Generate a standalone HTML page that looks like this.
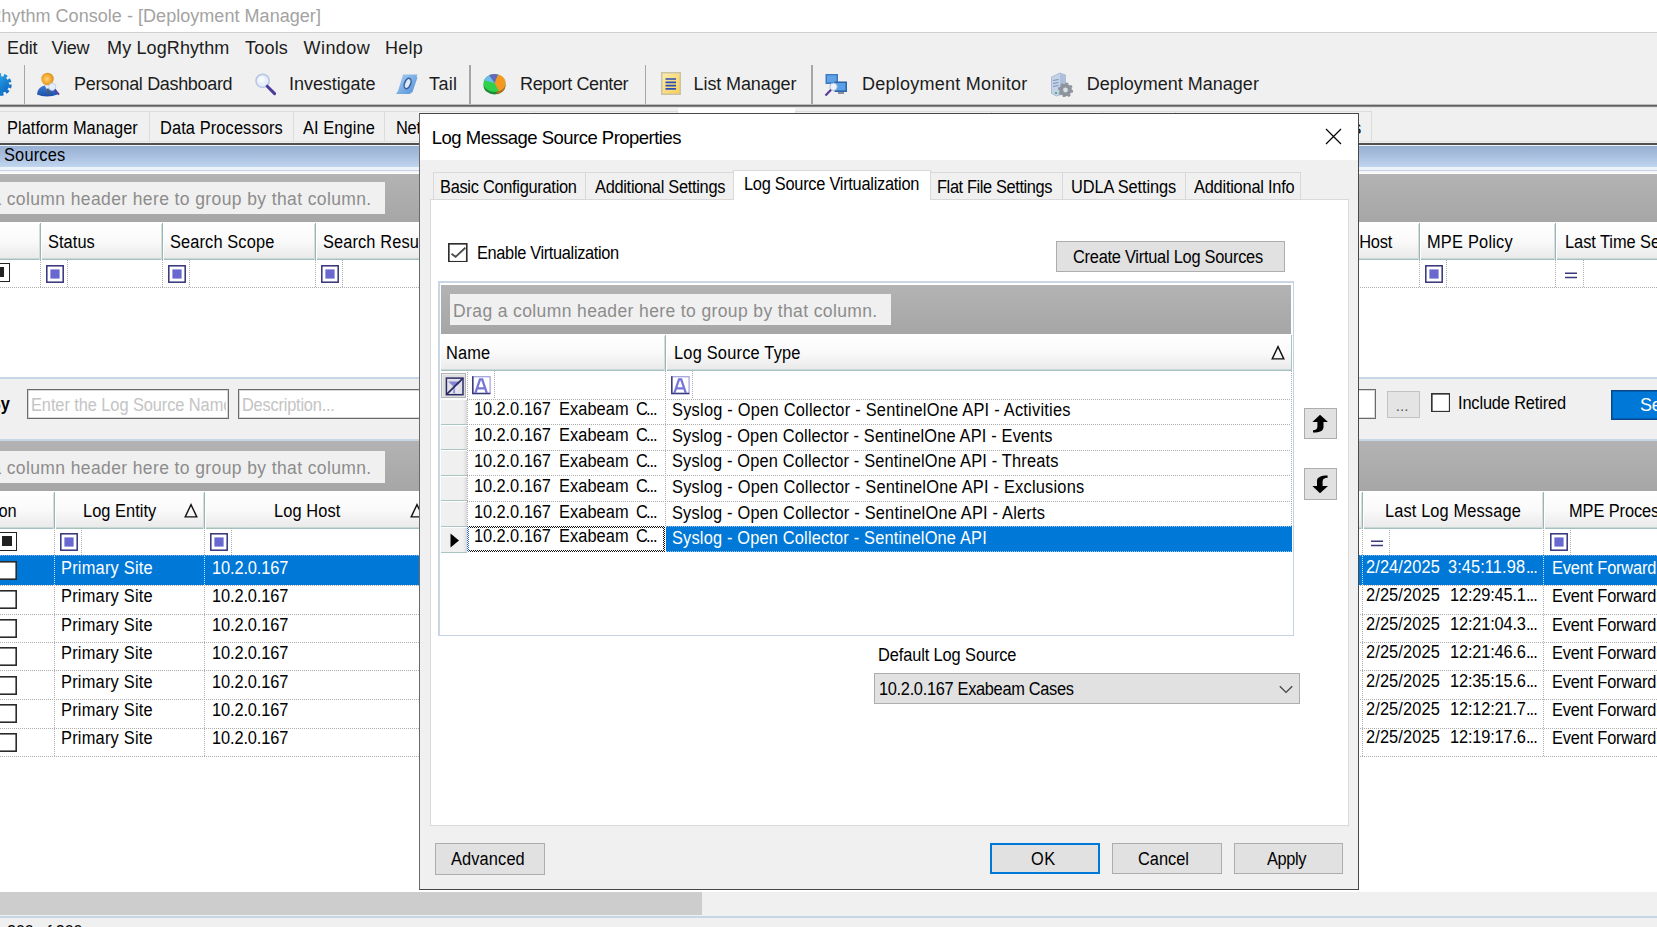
<!DOCTYPE html>
<html><head><meta charset="utf-8"><title>LogRhythm Console - Deployment Manager</title>
<style>
html,body{margin:0;padding:0;background:#fff}
#root{position:relative;width:1657px;height:927px;overflow:hidden;background:#fff;font-family:"Liberation Sans",sans-serif}
.b{position:absolute;display:block}
.t{position:absolute;white-space:pre;line-height:1;transform-origin:0 0;font-family:"Liberation Sans",sans-serif}
</style></head><body><div id="root">
<!-- main window -->
<div class="b" style="left:0px;top:0px;width:1657px;height:32px;background:#fff"></div>
<div class="b" style="left:0px;top:32px;width:1657px;height:1px;background:#cfcfcf"></div>
<div class="b" style="left:0px;top:33px;width:1657px;height:71px;background:#f0f0f0"></div>
<div class="b" style="left:23.5px;top:65px;width:1.5px;height:39px;background:#a6a6a6"></div>
<div class="b" style="left:469.0px;top:65px;width:1.5px;height:39px;background:#a6a6a6"></div>
<div class="b" style="left:644.5px;top:65px;width:1.5px;height:39px;background:#a6a6a6"></div>
<div class="b" style="left:811.0px;top:65px;width:1.5px;height:39px;background:#a6a6a6"></div>
<div class="b" style="left:0px;top:104px;width:1657px;height:1px;background:#bdbdbd"></div>
<div class="b" style="left:0px;top:105px;width:1657px;height:1px;background:#606060"></div>
<div class="b" style="left:0px;top:106px;width:1657px;height:1px;background:#858585"></div>
<div class="b" style="left:0px;top:107px;width:1657px;height:1px;background:#e4e4e4"></div>
<div class="b" style="left:0px;top:108px;width:1657px;height:35px;background:#f0f0f0"></div>
<div class="b" style="left:0px;top:111px;width:1371px;height:1px;background:#dcdcdc"></div>
<div class="b" style="left:148.5px;top:111px;width:1.0px;height:30px;background:#dcdcdc"></div>
<div class="b" style="left:292.5px;top:111px;width:1.0px;height:30px;background:#dcdcdc"></div>
<div class="b" style="left:384px;top:111px;width:1px;height:30px;background:#dcdcdc"></div>
<div class="b" style="left:534px;top:111px;width:1px;height:30px;background:#dcdcdc"></div>
<div class="b" style="left:677px;top:111px;width:1px;height:30px;background:#dcdcdc"></div>
<div class="b" style="left:795px;top:111px;width:1px;height:30px;background:#dcdcdc"></div>
<div class="b" style="left:990.5px;top:111px;width:1.0px;height:30px;background:#dcdcdc"></div>
<div class="b" style="left:1101.5px;top:111px;width:1.0px;height:30px;background:#dcdcdc"></div>
<div class="b" style="left:1174.5px;top:111px;width:1.0px;height:30px;background:#dcdcdc"></div>
<div class="b" style="left:1371px;top:111px;width:1px;height:30px;background:#dcdcdc"></div>
<div class="b" style="left:677.5px;top:108px;width:117.5px;height:35px;background:#fff"></div>
<div class="b" style="left:0px;top:141px;width:1657px;height:1px;background:#e2e2e2"></div>
<div class="b" style="left:0px;top:143px;width:1657px;height:2px;background:#505050"></div>
<div class="b" style="left:0px;top:145px;width:1657px;height:1px;background:#eef3fa"></div>
<div class="b" style="left:0px;top:146px;width:1657px;height:21px;background:linear-gradient(180deg,#98b0d2 0,#a9c0e0 50%,#c0d5ee 100%)"></div>
<div class="b" style="left:0px;top:167px;width:1657px;height:3px;background:#eef2f9"></div>
<div class="b" style="left:0px;top:170px;width:1657px;height:1px;background:#c6d3e5"></div>
<div class="b" style="left:0px;top:171px;width:1657px;height:2.5px;background:#f5f6f9"></div>
<div class="b" style="left:0px;top:173px;width:1657px;height:204px;background:#fff"></div>
<div class="b" style="left:0px;top:173.5px;width:1657px;height:49.0px;background:linear-gradient(180deg,#b3b3b3,#a6a6a6)"></div><div class="b" style="left:-10px;top:182px;width:395px;height:31.69999999999999px;background:#f0f0f0"></div>
<div class="b" style="left:0px;top:222px;width:1657px;height:38px;background:linear-gradient(180deg,#ffffff 0%,#fafafa 50%,#e8e8e8 100%)"></div><div class="b" style="left:0px;top:258px;width:1657px;height:1px;background:#c9d9d7"></div><div class="b" style="left:0px;top:259px;width:1657px;height:1px;background:#a3c2bf"></div><div class="b" style="left:39px;top:224px;width:1px;height:36px;background:#d5dedd"></div><div class="b" style="left:40px;top:223px;width:1px;height:37px;background:#98b6b3"></div><div class="b" style="left:41px;top:223px;width:1px;height:37px;background:#fff"></div><div class="b" style="left:161px;top:224px;width:1px;height:36px;background:#d5dedd"></div><div class="b" style="left:162px;top:223px;width:1px;height:37px;background:#98b6b3"></div><div class="b" style="left:163px;top:223px;width:1px;height:37px;background:#fff"></div><div class="b" style="left:314px;top:224px;width:1px;height:36px;background:#d5dedd"></div><div class="b" style="left:315px;top:223px;width:1px;height:37px;background:#98b6b3"></div><div class="b" style="left:316px;top:223px;width:1px;height:37px;background:#fff"></div><div class="b" style="left:1418px;top:224px;width:1px;height:36px;background:#d5dedd"></div><div class="b" style="left:1419px;top:223px;width:1px;height:37px;background:#98b6b3"></div><div class="b" style="left:1420px;top:223px;width:1px;height:37px;background:#fff"></div><div class="b" style="left:1554px;top:224px;width:1px;height:36px;background:#d5dedd"></div><div class="b" style="left:1555px;top:223px;width:1px;height:37px;background:#98b6b3"></div><div class="b" style="left:1556px;top:223px;width:1px;height:37px;background:#fff"></div>
<div class="b" style="left:-9px;top:263px;width:19px;height:19px;border:1.5px solid #222;box-sizing:border-box;background:#fff"><div class="b" style="left:0;top:3px;width:12px;height:10px;background:#222"></div></div>
<svg class="b" style="left:46px;top:265px" width="18" height="18" viewBox="0 0 18 18"><rect x="0.8" y="0.8" width="16.4" height="16.4" fill="#fff" stroke="#38387e" stroke-width="1.55"/><rect x="4.4" y="4.4" width="9.2" height="9.2" fill="#6868d0"/></svg>
<svg class="b" style="left:168px;top:265px" width="18" height="18" viewBox="0 0 18 18"><rect x="0.8" y="0.8" width="16.4" height="16.4" fill="#fff" stroke="#38387e" stroke-width="1.55"/><rect x="4.4" y="4.4" width="9.2" height="9.2" fill="#6868d0"/></svg>
<svg class="b" style="left:321px;top:265px" width="18" height="18" viewBox="0 0 18 18"><rect x="0.8" y="0.8" width="16.4" height="16.4" fill="#fff" stroke="#38387e" stroke-width="1.55"/><rect x="4.4" y="4.4" width="9.2" height="9.2" fill="#6868d0"/></svg>
<svg class="b" style="left:1424.5px;top:265px" width="18" height="18" viewBox="0 0 18 18"><rect x="0.8" y="0.8" width="16.4" height="16.4" fill="#fff" stroke="#38387e" stroke-width="1.55"/><rect x="4.4" y="4.4" width="9.2" height="9.2" fill="#6868d0"/></svg>
<svg class="b" style="left:1564.5px;top:271.5px" width="12" height="7" viewBox="0 0 12 7"><path d="M0 1.2 H12 M0 5.4 H12" stroke="#38387e" stroke-width="1.5"/></svg>
<div class="b" style="left:40px;top:260px;width:1px;height:27px;background:repeating-linear-gradient(180deg,#adadad 0 1px,transparent 1px 2px)"></div>
<div class="b" style="left:67px;top:260px;width:1px;height:27px;background:repeating-linear-gradient(180deg,#adadad 0 1px,transparent 1px 2px)"></div>
<div class="b" style="left:162px;top:260px;width:1px;height:27px;background:repeating-linear-gradient(180deg,#adadad 0 1px,transparent 1px 2px)"></div>
<div class="b" style="left:189px;top:260px;width:1px;height:27px;background:repeating-linear-gradient(180deg,#adadad 0 1px,transparent 1px 2px)"></div>
<div class="b" style="left:315px;top:260px;width:1px;height:27px;background:repeating-linear-gradient(180deg,#adadad 0 1px,transparent 1px 2px)"></div>
<div class="b" style="left:342px;top:260px;width:1px;height:27px;background:repeating-linear-gradient(180deg,#adadad 0 1px,transparent 1px 2px)"></div>
<div class="b" style="left:1419px;top:260px;width:1px;height:27px;background:repeating-linear-gradient(180deg,#adadad 0 1px,transparent 1px 2px)"></div>
<div class="b" style="left:1446px;top:260px;width:1px;height:27px;background:repeating-linear-gradient(180deg,#adadad 0 1px,transparent 1px 2px)"></div>
<div class="b" style="left:1555px;top:260px;width:1px;height:27px;background:repeating-linear-gradient(180deg,#adadad 0 1px,transparent 1px 2px)"></div>
<div class="b" style="left:1583px;top:260px;width:1px;height:27px;background:repeating-linear-gradient(180deg,#adadad 0 1px,transparent 1px 2px)"></div>
<div class="b" style="left:0px;top:287px;width:1657px;height:1px;background:repeating-linear-gradient(90deg,#adadad 0 1px,transparent 1px 2px)"></div>
<div class="b" style="left:0px;top:377px;width:1657px;height:2px;background:#c7d6e6"></div>
<div class="b" style="left:0px;top:379px;width:1657px;height:60px;background:#f0f0f0"></div>
<div class="b" style="left:0px;top:439px;width:1657px;height:2px;background:#c7d6e6"></div>
<div class="b" style="left:27px;top:389px;width:202px;height:30px;background:#fff;border:1px solid #6c6c6c;box-shadow:inset 0 0 0 1px rgba(0,0,0,0.16);box-sizing:border-box"></div>
<div class="b" style="left:238px;top:389px;width:1138px;height:30px;background:#fff;border:1px solid #6c6c6c;box-shadow:inset 0 0 0 1px rgba(0,0,0,0.16);box-sizing:border-box"></div>
<div class="b" style="left:1387px;top:391px;width:33px;height:26.5px;background:#e4e4e4;border:1px solid #c2c2c2;box-sizing:border-box"></div>
<svg class="b" style="left:1430.5px;top:392.5px" width="19.5" height="19.5" viewBox="0 0 19 19"><rect x="0.8" y="0.8" width="17.4" height="17.4" fill="#fff" stroke="#333" stroke-width="1.6"/></svg>
<div class="b" style="left:1611px;top:390px;width:69px;height:29.5px;background:#0078d7;border:1px solid #0d4684;box-shadow:inset 0 0 0 1px rgba(0,50,110,0.35);box-sizing:border-box"></div>
<div class="b" style="left:0px;top:441px;width:1657px;height:451px;background:#fff"></div>
<div class="b" style="left:0px;top:441px;width:1657px;height:50px;background:linear-gradient(180deg,#b3b3b3,#a6a6a6)"></div><div class="b" style="left:-10px;top:451px;width:395px;height:31.5px;background:#f0f0f0"></div>
<div class="b" style="left:0px;top:491px;width:1657px;height:38px;background:linear-gradient(180deg,#ffffff 0%,#fafafa 50%,#e8e8e8 100%)"></div><div class="b" style="left:0px;top:527px;width:1657px;height:1px;background:#c9d9d7"></div><div class="b" style="left:0px;top:528px;width:1657px;height:1px;background:#a3c2bf"></div><div class="b" style="left:53px;top:493px;width:1px;height:36px;background:#d5dedd"></div><div class="b" style="left:54px;top:492px;width:1px;height:37px;background:#98b6b3"></div><div class="b" style="left:55px;top:492px;width:1px;height:37px;background:#fff"></div><div class="b" style="left:203px;top:493px;width:1px;height:36px;background:#d5dedd"></div><div class="b" style="left:204px;top:492px;width:1px;height:37px;background:#98b6b3"></div><div class="b" style="left:205px;top:492px;width:1px;height:37px;background:#fff"></div><div class="b" style="left:1361px;top:493px;width:1px;height:36px;background:#d5dedd"></div><div class="b" style="left:1362px;top:492px;width:1px;height:37px;background:#98b6b3"></div><div class="b" style="left:1363px;top:492px;width:1px;height:37px;background:#fff"></div><div class="b" style="left:1542px;top:493px;width:1px;height:36px;background:#d5dedd"></div><div class="b" style="left:1543px;top:492px;width:1px;height:37px;background:#98b6b3"></div><div class="b" style="left:1544px;top:492px;width:1px;height:37px;background:#fff"></div>
<svg class="b" style="left:184px;top:502.5px" width="14" height="15" viewBox="0 0 14 15"><path d="M7 1.6 L12.8 13.9 L1.2 13.9 Z" fill="none" stroke="#111" stroke-width="1.4"/></svg>
<svg class="b" style="left:409.5px;top:502.5px" width="14" height="15" viewBox="0 0 14 15"><path d="M7 1.6 L12.8 13.9 L1.2 13.9 Z" fill="none" stroke="#111" stroke-width="1.4"/></svg>
<div class="b" style="left:-2px;top:532px;width:19px;height:19px;border:1.5px solid #222;box-sizing:border-box;background:#fff"><div class="b" style="left:3px;top:3px;width:10px;height:10px;background:#222"></div></div>
<svg class="b" style="left:59.5px;top:533px" width="18" height="18" viewBox="0 0 18 18"><rect x="0.8" y="0.8" width="16.4" height="16.4" fill="#fff" stroke="#38387e" stroke-width="1.55"/><rect x="4.4" y="4.4" width="9.2" height="9.2" fill="#6868d0"/></svg>
<svg class="b" style="left:209.5px;top:533px" width="18" height="18" viewBox="0 0 18 18"><rect x="0.8" y="0.8" width="16.4" height="16.4" fill="#fff" stroke="#38387e" stroke-width="1.55"/><rect x="4.4" y="4.4" width="9.2" height="9.2" fill="#6868d0"/></svg>
<svg class="b" style="left:1549.5px;top:533px" width="18" height="18" viewBox="0 0 18 18"><rect x="0.8" y="0.8" width="16.4" height="16.4" fill="#fff" stroke="#38387e" stroke-width="1.55"/><rect x="4.4" y="4.4" width="9.2" height="9.2" fill="#6868d0"/></svg>
<svg class="b" style="left:1370.5px;top:539.5px" width="12" height="7" viewBox="0 0 12 7"><path d="M0 1.2 H12 M0 5.4 H12" stroke="#38387e" stroke-width="1.5"/></svg>
<div class="b" style="left:54px;top:528px;width:1px;height:27px;background:repeating-linear-gradient(180deg,#adadad 0 1px,transparent 1px 2px)"></div>
<div class="b" style="left:81px;top:528px;width:1px;height:27px;background:repeating-linear-gradient(180deg,#adadad 0 1px,transparent 1px 2px)"></div>
<div class="b" style="left:204px;top:528px;width:1px;height:27px;background:repeating-linear-gradient(180deg,#adadad 0 1px,transparent 1px 2px)"></div>
<div class="b" style="left:231px;top:528px;width:1px;height:27px;background:repeating-linear-gradient(180deg,#adadad 0 1px,transparent 1px 2px)"></div>
<div class="b" style="left:1362px;top:528px;width:1px;height:27px;background:repeating-linear-gradient(180deg,#adadad 0 1px,transparent 1px 2px)"></div>
<div class="b" style="left:1389px;top:528px;width:1px;height:27px;background:repeating-linear-gradient(180deg,#adadad 0 1px,transparent 1px 2px)"></div>
<div class="b" style="left:1543px;top:528px;width:1px;height:27px;background:repeating-linear-gradient(180deg,#adadad 0 1px,transparent 1px 2px)"></div>
<div class="b" style="left:1570px;top:528px;width:1px;height:27px;background:repeating-linear-gradient(180deg,#adadad 0 1px,transparent 1px 2px)"></div>
<div class="b" style="left:0px;top:555px;width:1657px;height:29.5px;background:#0078d7"></div>
<svg class="b" style="left:-2px;top:561px" width="19" height="19" viewBox="0 0 19 19"><rect x="0.8" y="0.8" width="17.4" height="17.4" fill="#fff" stroke="#2a2a2a" stroke-width="1.6"/></svg>
<svg class="b" style="left:-2px;top:590px" width="19" height="19" viewBox="0 0 19 19"><rect x="0.8" y="0.8" width="17.4" height="17.4" fill="#fff" stroke="#2a2a2a" stroke-width="1.6"/></svg>
<svg class="b" style="left:-2px;top:618.5px" width="19" height="19" viewBox="0 0 19 19"><rect x="0.8" y="0.8" width="17.4" height="17.4" fill="#fff" stroke="#2a2a2a" stroke-width="1.6"/></svg>
<svg class="b" style="left:-2px;top:647px" width="19" height="19" viewBox="0 0 19 19"><rect x="0.8" y="0.8" width="17.4" height="17.4" fill="#fff" stroke="#2a2a2a" stroke-width="1.6"/></svg>
<svg class="b" style="left:-2px;top:675.5px" width="19" height="19" viewBox="0 0 19 19"><rect x="0.8" y="0.8" width="17.4" height="17.4" fill="#fff" stroke="#2a2a2a" stroke-width="1.6"/></svg>
<svg class="b" style="left:-2px;top:704px" width="19" height="19" viewBox="0 0 19 19"><rect x="0.8" y="0.8" width="17.4" height="17.4" fill="#fff" stroke="#2a2a2a" stroke-width="1.6"/></svg>
<svg class="b" style="left:-2px;top:732.5px" width="19" height="19" viewBox="0 0 19 19"><rect x="0.8" y="0.8" width="17.4" height="17.4" fill="#fff" stroke="#2a2a2a" stroke-width="1.6"/></svg>
<div class="b" style="left:0px;top:585px;width:1657px;height:1px;background:repeating-linear-gradient(90deg,#adadad 0 1px,transparent 1px 2px)"></div>
<div class="b" style="left:0px;top:614px;width:1657px;height:1px;background:repeating-linear-gradient(90deg,#adadad 0 1px,transparent 1px 2px)"></div>
<div class="b" style="left:0px;top:642px;width:1657px;height:1px;background:repeating-linear-gradient(90deg,#adadad 0 1px,transparent 1px 2px)"></div>
<div class="b" style="left:0px;top:670px;width:1657px;height:1px;background:repeating-linear-gradient(90deg,#adadad 0 1px,transparent 1px 2px)"></div>
<div class="b" style="left:0px;top:699px;width:1657px;height:1px;background:repeating-linear-gradient(90deg,#adadad 0 1px,transparent 1px 2px)"></div>
<div class="b" style="left:0px;top:728px;width:1657px;height:1px;background:repeating-linear-gradient(90deg,#adadad 0 1px,transparent 1px 2px)"></div>
<div class="b" style="left:0px;top:756px;width:1657px;height:1px;background:repeating-linear-gradient(90deg,#adadad 0 1px,transparent 1px 2px)"></div>
<div class="b" style="left:0px;top:555px;width:1657px;height:1px;background:repeating-linear-gradient(90deg,#7fb4e6 0 1px,transparent 1px 2px)"></div>
<div class="b" style="left:54px;top:556px;width:1px;height:29px;background:repeating-linear-gradient(180deg,#cfe3f6 0 1px,transparent 1px 2px)"></div>
<div class="b" style="left:54px;top:585px;width:1px;height:171px;background:repeating-linear-gradient(180deg,#adadad 0 1px,transparent 1px 2px)"></div>
<div class="b" style="left:204px;top:556px;width:1px;height:29px;background:repeating-linear-gradient(180deg,#cfe3f6 0 1px,transparent 1px 2px)"></div>
<div class="b" style="left:204px;top:585px;width:1px;height:171px;background:repeating-linear-gradient(180deg,#adadad 0 1px,transparent 1px 2px)"></div>
<div class="b" style="left:1362px;top:556px;width:1px;height:29px;background:repeating-linear-gradient(180deg,#cfe3f6 0 1px,transparent 1px 2px)"></div>
<div class="b" style="left:1362px;top:585px;width:1px;height:171px;background:repeating-linear-gradient(180deg,#adadad 0 1px,transparent 1px 2px)"></div>
<div class="b" style="left:1543px;top:556px;width:1px;height:29px;background:repeating-linear-gradient(180deg,#cfe3f6 0 1px,transparent 1px 2px)"></div>
<div class="b" style="left:1543px;top:585px;width:1px;height:171px;background:repeating-linear-gradient(180deg,#adadad 0 1px,transparent 1px 2px)"></div>
<div class="b" style="left:0px;top:892px;width:1657px;height:24px;background:#f0f0f0"></div>
<div class="b" style="left:0px;top:892px;width:701.5px;height:22.5px;background:#cdcdcd"></div>
<div class="b" style="left:0px;top:916px;width:1657px;height:2px;background:#c7d6e6"></div>
<div class="b" style="left:0px;top:918px;width:1657px;height:9px;background:#f0f0f0"></div>
<svg class="b" style="left:-11px;top:73px" width="23" height="23" viewBox="0 0 23 23"><defs><linearGradient id="gg" x1="0" y1="0" x2="1" y2="1"><stop offset="0" stop-color="#2fb0ec"/><stop offset="1" stop-color="#0a62c0"/></linearGradient></defs><circle cx="11.5" cy="11.5" r="8.6" fill="url(#gg)"/><circle cx="11.5" cy="11.5" r="9.6" fill="none" stroke="url(#gg)" stroke-width="3.2" stroke-dasharray="3.4 2.63"/></svg>
<svg class="b" style="left:36px;top:72px" width="25" height="25" viewBox="0 0 25 25"><defs><radialGradient id="hd" cx="0.45" cy="0.5" r="0.6"><stop offset="0" stop-color="#ffd27a"/><stop offset="0.6" stop-color="#f3a72a"/><stop offset="1" stop-color="#c9881e"/></radialGradient><linearGradient id="bd" x1="0" y1="0" x2="0" y2="1"><stop offset="0" stop-color="#3f7fd6"/><stop offset="1" stop-color="#1c4fa8"/></linearGradient></defs><path d="M1 22.5 C1.5 16 6 13.5 11.5 13 C17 13.5 21 16 21.5 22.5 C15 25 7 25 1 22.5 Z" fill="url(#bd)"/><circle cx="11.5" cy="7" r="6.2" fill="url(#hd)"/><path d="M8.5 13.2 L11.8 19 L14 13 Z" fill="#e8eef8"/><path d="M11.6 16.5 L12.6 22 " stroke="#555" stroke-width="1.6"/><circle cx="16.3" cy="14.8" r="3.6" fill="#e4eefc" stroke="#b9c9e6" stroke-width="0.8"/><path d="M18.6 17.6 L23 22.6" stroke="#5a3fa0" stroke-width="2"/></svg>
<svg class="b" style="left:254px;top:72px" width="24" height="25" viewBox="0 0 24 25"><circle cx="8.6" cy="8.8" r="6.6" fill="#e6eefb" stroke="#b7c6e2" stroke-width="1.5"/><circle cx="7.6" cy="7.6" r="3.2" fill="#f6f9fe"/><path d="M13.2 14.2 L20.6 21.6" stroke="#4b3a9c" stroke-width="3" stroke-linecap="round"/></svg>
<svg class="b" style="left:395px;top:73px" width="24" height="23" viewBox="0 0 24 23"><defs><linearGradient id="tl" x1="0" y1="0" x2="1" y2="1"><stop offset="0" stop-color="#a9d0f4"/><stop offset="1" stop-color="#4f8fd6"/></linearGradient></defs><path d="M8 1.5 L22.5 1.5 L21.5 4 L22.5 4.5 L17.5 19 L14.5 21 L1 21 L3 18 Z" fill="url(#tl)"/><ellipse cx="12.6" cy="10.5" rx="3" ry="5.4" transform="rotate(22 12.6 10.5)" fill="#dcebfa" stroke="#3d5f9c" stroke-width="1.5"/></svg>
<svg class="b" style="left:483px;top:73px" width="23" height="22" viewBox="0 0 23 22"><ellipse cx="11.5" cy="12.5" rx="11" ry="9" fill="#1d8a35"/><path d="M11.5 12.5 L22.5 12.5 A11 9 0 0 1 14 21.3 Z" fill="#b8671a"/><ellipse cx="11.5" cy="10" rx="11" ry="9" fill="#2fd04a"/><path d="M11.5 10 L15 1.5 A11 9 0 0 1 16 18.2 Z" fill="#f6981f"/><path d="M11.5 10 L6 2.2 A11 9 0 0 1 15 1.5 Z" fill="#6a68bd"/><path d="M11.5 10 L1 7.2 A11 9 0 0 1 6 2.2 Z" fill="#6cbcf0"/></svg>
<svg class="b" style="left:661px;top:72px" width="20" height="23" viewBox="0 0 20 23"><defs><linearGradient id="lg" x1="0" y1="0" x2="1" y2="1"><stop offset="0" stop-color="#fdeeb0"/><stop offset="1" stop-color="#f6cd56"/></linearGradient></defs><rect x="0.75" y="0.75" width="18.5" height="21.5" fill="url(#lg)" stroke="#c9c3a4" stroke-width="1.5"/><path d="M4.5 7 H15 M4.5 10.3 H15 M4.5 13.6 H15 M4.5 16.9 H15" stroke="#2a4fb4" stroke-width="1.7"/></svg>
<svg class="b" style="left:824px;top:73px" width="24" height="24" viewBox="0 0 24 24"><rect x="1.5" y="1" width="12.5" height="10" fill="#3f78c2"/><rect x="3" y="2.3" width="9.5" height="7" fill="#5fa2e6"/><rect x="10.5" y="8.5" width="12.5" height="10.5" fill="#2f63a8"/><rect x="12" y="10" width="9.5" height="7.4" fill="#58a0e8"/><rect x="14" y="19" width="6" height="2" fill="#8a8f98"/><circle cx="9.5" cy="13.8" r="3.7" fill="#eef4fc" stroke="#a9bbd8" stroke-width="1"/><path d="M7 16.8 L1.5 22.6" stroke="#5b3a9c" stroke-width="2.2"/></svg>
<svg class="b" style="left:1049px;top:72px" width="24" height="25" viewBox="0 0 24 25"><path d="M2.5 5 L11 1 L16.5 3 L16.5 21 L7.5 24 L2.5 21.5 Z" fill="#c3d2e8" stroke="#a3b5d0" stroke-width="0.8"/><path d="M11 1 L16.5 3 L16.5 21 L11 23 Z" fill="#aebfda"/><path d="M4 8.5 L9.5 7.5 M4 11.5 L9.5 10.5 M4 14.5 L9.5 13.5" stroke="#7f93b4" stroke-width="1.2"/><circle cx="16.5" cy="18" r="6.3" fill="#8e949c"/><circle cx="16.5" cy="18" r="6.6" fill="none" stroke="#8e949c" stroke-width="2" stroke-dasharray="2.6 2.58"/><circle cx="16.5" cy="18" r="2.4" fill="#d9dde4"/><circle cx="7" cy="21" r="1.1" fill="#35b048"/></svg>

<span class="t" style="left:1.30px;top:7.26px;font-size:18px;letter-spacing:0.041px;color:#a3a3a3">hythm Console - [Deployment Manager]</span>
<span class="t" style="left:-11.40px;top:7.26px;font-size:18px;letter-spacing:0.000px;color:#a3a3a3">R</span>
<span class="t" style="left:7.10px;top:38.96px;font-size:18px;letter-spacing:-0.209px;color:#1c1c1c">Edit</span>
<span class="t" style="left:51.60px;top:38.96px;font-size:18px;letter-spacing:-0.258px;color:#1c1c1c">View</span>
<span class="t" style="left:107.10px;top:38.96px;font-size:18px;letter-spacing:0.109px;color:#1c1c1c">My LogRhythm</span>
<span class="t" style="left:245.10px;top:38.96px;font-size:18px;letter-spacing:0.171px;color:#1c1c1c">Tools</span>
<span class="t" style="left:303.60px;top:38.96px;font-size:18px;letter-spacing:0.412px;color:#1c1c1c">Window</span>
<span class="t" style="left:385.10px;top:38.96px;font-size:18px;letter-spacing:0.220px;color:#1c1c1c">Help</span>
<span class="t" style="left:74.10px;top:74.96px;font-size:18px;letter-spacing:-0.332px;color:#1c1c1c">Personal Dashboard</span>
<span class="t" style="left:289.10px;top:74.96px;font-size:18px;letter-spacing:-0.073px;color:#1c1c1c">Investigate</span>
<span class="t" style="left:429.10px;top:74.96px;font-size:18px;letter-spacing:0.296px;color:#1c1c1c">Tail</span>
<span class="t" style="left:520.10px;top:74.96px;font-size:18px;letter-spacing:-0.381px;color:#1c1c1c">Report Center</span>
<span class="t" style="left:693.60px;top:74.96px;font-size:18px;letter-spacing:-0.110px;color:#1c1c1c">List Manager</span>
<span class="t" style="left:861.90px;top:74.96px;font-size:18px;letter-spacing:0.253px;color:#1c1c1c">Deployment Monitor</span>
<span class="t" style="left:1086.70px;top:74.96px;font-size:18px;letter-spacing:0.006px;color:#1c1c1c">Deployment Manager</span>
<span class="t" style="left:6.60px;top:118.66px;font-size:18px;letter-spacing:0.043px;color:#000;transform:scaleX(0.91)">Platform Manager</span>
<span class="t" style="left:159.60px;top:118.66px;font-size:18px;letter-spacing:0.130px;color:#000;transform:scaleX(0.91)">Data Processors</span>
<span class="t" style="left:303.10px;top:118.66px;font-size:18px;letter-spacing:0.099px;color:#000;transform:scaleX(0.91)">AI Engine</span>
<span class="t" style="left:396.00px;top:118.66px;font-size:18px;letter-spacing:-0.300px;color:#000;transform:scaleX(0.91)">Network Monitors</span>
<span class="t" style="left:1272.15px;top:118.66px;font-size:18px;letter-spacing:-0.300px;color:#000;transform:scaleX(0.91)">Log Sources</span>
<span class="t" style="left:3.60px;top:145.96px;font-size:18px;letter-spacing:0.202px;color:#000;transform:scaleX(0.91)">Sources</span>
<span class="t" style="left:-53.40px;top:191.49px;font-size:17.5px;letter-spacing:0.387px;color:#8c8c8c">Drag a column header here to group by that column.</span>
<span class="t" style="left:-53.40px;top:460.49px;font-size:17.5px;letter-spacing:0.387px;color:#8c8c8c">Drag a column header here to group by that column.</span>
<span class="t" style="left:48.10px;top:233.06px;font-size:18px;letter-spacing:0.072px;color:#000;transform:scaleX(0.91)">Status</span>
<span class="t" style="left:170.10px;top:233.06px;font-size:18px;letter-spacing:0.134px;color:#000;transform:scaleX(0.91)">Search Scope</span>
<span class="t" style="left:1427.10px;top:233.06px;font-size:18px;letter-spacing:0.237px;color:#000;transform:scaleX(0.91)">MPE Policy</span>
<span class="t" style="left:323.10px;top:233.06px;font-size:18px;letter-spacing:0.126px;color:#000;transform:scaleX(0.91)">Search Resu</span>
<span class="t" style="left:1327.96px;top:233.06px;font-size:18px;letter-spacing:-0.200px;color:#000;transform:scaleX(0.91)">Log Host</span>
<span class="t" style="left:1564.75px;top:233.06px;font-size:18px;letter-spacing:-0.050px;color:#000;transform:scaleX(0.91)">Last Time Seen</span>
<span class="t" style="left:-11.44px;top:394.76px;font-size:18px;letter-spacing:0.000px;color:#000;font-weight:700;transform:scaleX(0.91)">By</span>
<div class="b" style="left:28.5px;top:391.76px;width:197.5px;height:28px;overflow:hidden"><span class="t" style="left:2.60px;top:4px;font-size:18px;letter-spacing:-0.079px;color:#c4c4c4;transform:scaleX(0.91)">Enter the Log Source Name</span></div>
<span class="t" style="left:242.10px;top:395.76px;font-size:18px;letter-spacing:-0.227px;color:#c4c4c4;transform:scaleX(0.91)">Description...</span>
<span class="t" style="left:1395.85px;top:398.30px;font-size:15px;letter-spacing:0.014px;color:#555">...</span>
<span class="t" style="left:1458.35px;top:393.51px;font-size:18px;letter-spacing:-0.162px;color:#000;transform:scaleX(0.91)">Include Retired</span>
<span class="t" style="left:1640.00px;top:395.76px;font-size:18px;letter-spacing:-0.200px;color:#fff">Search</span>
<span class="t" style="left:83.10px;top:501.76px;font-size:18px;letter-spacing:0.051px;color:#000;transform:scaleX(0.91)">Log Entity</span>
<span class="t" style="left:274.10px;top:501.76px;font-size:18px;letter-spacing:0.108px;color:#000;transform:scaleX(0.91)">Log Host</span>
<span class="t" style="left:1385.10px;top:501.76px;font-size:18px;letter-spacing:0.138px;color:#000;transform:scaleX(0.91)">Last Log Message</span>
<span class="t" style="left:-27.62px;top:501.76px;font-size:18px;letter-spacing:-0.200px;color:#000;transform:scaleX(0.91)">Action</span>
<span class="t" style="left:1569.25px;top:501.76px;font-size:18px;letter-spacing:-0.100px;color:#000;transform:scaleX(0.91)">MPE Processing</span>
<span class="t" style="left:61.10px;top:558.76px;font-size:18px;letter-spacing:0.249px;color:#fff;transform:scaleX(0.91)">Primary Site</span>
<span class="t" style="left:211.60px;top:558.76px;font-size:18px;letter-spacing:-0.130px;color:#fff;transform:scaleX(0.91)">10.2.0.167</span>
<span class="t" style="left:1365.85px;top:557.76px;font-size:18px;letter-spacing:0.120px;color:#fff;transform:scaleX(0.91)">2/24/2025</span>
<span class="t" style="left:1448.35px;top:557.76px;font-size:18px;letter-spacing:0.097px;color:#fff;transform:scaleX(0.91)">3:45:11.98</span>
<span class="t" style="left:1525.60px;top:557.76px;font-size:18px;letter-spacing:-1.039px;color:#fff;transform:scaleX(0.91)">...</span>
<span class="t" style="left:1551.75px;top:558.76px;font-size:18px;letter-spacing:-0.200px;color:#fff;transform:scaleX(0.91)">Event Forwarding</span>
<span class="t" style="left:61.10px;top:587.26px;font-size:18px;letter-spacing:0.249px;color:#000;transform:scaleX(0.91)">Primary Site</span>
<span class="t" style="left:211.60px;top:587.26px;font-size:18px;letter-spacing:-0.130px;color:#000;transform:scaleX(0.91)">10.2.0.167</span>
<span class="t" style="left:1365.85px;top:586.26px;font-size:18px;letter-spacing:0.120px;color:#000;transform:scaleX(0.91)">2/25/2025</span>
<span class="t" style="left:1449.60px;top:586.26px;font-size:18px;letter-spacing:-0.188px;color:#000;transform:scaleX(0.91)">12:29:45.1</span>
<span class="t" style="left:1525.60px;top:586.26px;font-size:18px;letter-spacing:-1.039px;color:#000;transform:scaleX(0.91)">...</span>
<span class="t" style="left:1551.75px;top:587.26px;font-size:18px;letter-spacing:-0.200px;color:#000;transform:scaleX(0.91)">Event Forwarding</span>
<span class="t" style="left:61.10px;top:615.76px;font-size:18px;letter-spacing:0.249px;color:#000;transform:scaleX(0.91)">Primary Site</span>
<span class="t" style="left:211.60px;top:615.76px;font-size:18px;letter-spacing:-0.130px;color:#000;transform:scaleX(0.91)">10.2.0.167</span>
<span class="t" style="left:1365.85px;top:614.76px;font-size:18px;letter-spacing:0.120px;color:#000;transform:scaleX(0.91)">2/25/2025</span>
<span class="t" style="left:1449.60px;top:614.76px;font-size:18px;letter-spacing:-0.188px;color:#000;transform:scaleX(0.91)">12:21:04.3</span>
<span class="t" style="left:1525.60px;top:614.76px;font-size:18px;letter-spacing:-1.039px;color:#000;transform:scaleX(0.91)">...</span>
<span class="t" style="left:1551.75px;top:615.76px;font-size:18px;letter-spacing:-0.200px;color:#000;transform:scaleX(0.91)">Event Forwarding</span>
<span class="t" style="left:61.10px;top:644.26px;font-size:18px;letter-spacing:0.249px;color:#000;transform:scaleX(0.91)">Primary Site</span>
<span class="t" style="left:211.60px;top:644.26px;font-size:18px;letter-spacing:-0.130px;color:#000;transform:scaleX(0.91)">10.2.0.167</span>
<span class="t" style="left:1365.85px;top:643.26px;font-size:18px;letter-spacing:0.120px;color:#000;transform:scaleX(0.91)">2/25/2025</span>
<span class="t" style="left:1449.60px;top:643.26px;font-size:18px;letter-spacing:-0.188px;color:#000;transform:scaleX(0.91)">12:21:46.6</span>
<span class="t" style="left:1525.60px;top:643.26px;font-size:18px;letter-spacing:-1.039px;color:#000;transform:scaleX(0.91)">...</span>
<span class="t" style="left:1551.75px;top:644.26px;font-size:18px;letter-spacing:-0.200px;color:#000;transform:scaleX(0.91)">Event Forwarding</span>
<span class="t" style="left:61.10px;top:672.76px;font-size:18px;letter-spacing:0.249px;color:#000;transform:scaleX(0.91)">Primary Site</span>
<span class="t" style="left:211.60px;top:672.76px;font-size:18px;letter-spacing:-0.130px;color:#000;transform:scaleX(0.91)">10.2.0.167</span>
<span class="t" style="left:1365.85px;top:671.76px;font-size:18px;letter-spacing:0.120px;color:#000;transform:scaleX(0.91)">2/25/2025</span>
<span class="t" style="left:1449.60px;top:671.76px;font-size:18px;letter-spacing:-0.188px;color:#000;transform:scaleX(0.91)">12:35:15.6</span>
<span class="t" style="left:1525.60px;top:671.76px;font-size:18px;letter-spacing:-1.039px;color:#000;transform:scaleX(0.91)">...</span>
<span class="t" style="left:1551.75px;top:672.76px;font-size:18px;letter-spacing:-0.200px;color:#000;transform:scaleX(0.91)">Event Forwarding</span>
<span class="t" style="left:61.10px;top:700.76px;font-size:18px;letter-spacing:0.249px;color:#000;transform:scaleX(0.91)">Primary Site</span>
<span class="t" style="left:211.60px;top:700.76px;font-size:18px;letter-spacing:-0.130px;color:#000;transform:scaleX(0.91)">10.2.0.167</span>
<span class="t" style="left:1365.85px;top:699.76px;font-size:18px;letter-spacing:0.120px;color:#000;transform:scaleX(0.91)">2/25/2025</span>
<span class="t" style="left:1449.60px;top:699.76px;font-size:18px;letter-spacing:-0.188px;color:#000;transform:scaleX(0.91)">12:12:21.7</span>
<span class="t" style="left:1525.60px;top:699.76px;font-size:18px;letter-spacing:-1.039px;color:#000;transform:scaleX(0.91)">...</span>
<span class="t" style="left:1551.75px;top:700.76px;font-size:18px;letter-spacing:-0.200px;color:#000;transform:scaleX(0.91)">Event Forwarding</span>
<span class="t" style="left:61.10px;top:729.26px;font-size:18px;letter-spacing:0.249px;color:#000;transform:scaleX(0.91)">Primary Site</span>
<span class="t" style="left:211.60px;top:729.26px;font-size:18px;letter-spacing:-0.130px;color:#000;transform:scaleX(0.91)">10.2.0.167</span>
<span class="t" style="left:1365.85px;top:728.26px;font-size:18px;letter-spacing:0.120px;color:#000;transform:scaleX(0.91)">2/25/2025</span>
<span class="t" style="left:1449.60px;top:728.26px;font-size:18px;letter-spacing:-0.188px;color:#000;transform:scaleX(0.91)">12:19:17.6</span>
<span class="t" style="left:1525.60px;top:728.26px;font-size:18px;letter-spacing:-1.039px;color:#000;transform:scaleX(0.91)">...</span>
<span class="t" style="left:1551.75px;top:729.26px;font-size:18px;letter-spacing:-0.200px;color:#000;transform:scaleX(0.91)">Event Forwarding</span>
<span class="t" style="left:7.10px;top:924.06px;font-size:16px;letter-spacing:-0.034px;color:#000">200 of 200</span>
<!-- dialog -->
<div class="b" style="left:419px;top:113px;width:940px;height:777px;background:#f0f0f0;border:1px solid #484848;border-left-color:#6a6a6a;box-sizing:border-box"></div>
<div class="b" style="left:420px;top:114px;width:938px;height:46px;background:#fff"></div>
<svg class="b" style="left:1325px;top:128px" width="17" height="17" viewBox="0 0 17 17"><path d="M1 1 L16 16 M16 1 L1 16" stroke="#000" stroke-width="1.2" fill="none"/></svg>
<div class="b" style="left:429.5px;top:199px;width:919.0px;height:626.5px;background:#fff;border:1px solid #dadada;box-sizing:border-box"></div>
<div class="b" style="left:432.5px;top:172px;width:153.5px;height:28px;background:#f0f0f0;border:1px solid #d9d9d9;box-sizing:border-box"></div>
<div class="b" style="left:585px;top:172px;width:149px;height:28px;background:#f0f0f0;border:1px solid #d9d9d9;box-sizing:border-box"></div>
<div class="b" style="left:930px;top:172px;width:133px;height:28px;background:#f0f0f0;border:1px solid #d9d9d9;box-sizing:border-box"></div>
<div class="b" style="left:1062px;top:172px;width:124px;height:28px;background:#f0f0f0;border:1px solid #d9d9d9;box-sizing:border-box"></div>
<div class="b" style="left:1185px;top:172px;width:115.5px;height:28px;background:#f0f0f0;border:1px solid #d9d9d9;box-sizing:border-box"></div>
<div class="b" style="left:732.5px;top:169.5px;width:198.5px;height:30.5px;background:#fff;border:1px solid #d9d9d9;border-bottom:none;box-sizing:border-box"></div>
<svg class="b" style="left:448.4px;top:242.6px" width="19.6" height="19.6" viewBox="0 0 19 19"><rect x="0.8" y="0.8" width="17.4" height="17.4" fill="#fff" stroke="#2e2e2e" stroke-width="1.6"/><path d="M3.4 10.4 L7.4 13.4 L16.8 4.6" fill="none" stroke="#4a4a4a" stroke-width="1.7"/></svg>
<div class="b" style="left:1056px;top:241px;width:228.5px;height:31px;background:#e1e1e1;border:1px solid #adadad;box-sizing:border-box;"></div>
<div class="b" style="left:438px;top:281px;width:855.5px;height:355.29999999999995px;background:#fff;border:1px solid #c3d3e5;border-top:2px solid #cad6e5;border-left:2px solid #cad6e5;box-sizing:border-box"></div>
<div class="b" style="left:441px;top:285px;width:849.5px;height:49px;background:linear-gradient(180deg,#b3b3b3,#a6a6a6)"></div><div class="b" style="left:450px;top:294px;width:441px;height:31px;background:#f0f0f0"></div>
<div class="b" style="left:441px;top:334px;width:851px;height:37px;background:linear-gradient(180deg,#ffffff 0%,#fafafa 50%,#e8e8e8 100%)"></div><div class="b" style="left:441px;top:369px;width:851px;height:1px;background:#c9d9d7"></div><div class="b" style="left:441px;top:370px;width:851px;height:1px;background:#a3c2bf"></div><div class="b" style="left:664px;top:336px;width:1px;height:35px;background:#d5dedd"></div><div class="b" style="left:665px;top:335px;width:1px;height:36px;background:#98b6b3"></div><div class="b" style="left:666px;top:335px;width:1px;height:36px;background:#fff"></div>
<div class="b" style="left:1291px;top:335px;width:1px;height:36px;background:#a9c4c1"></div>
<svg class="b" style="left:1271px;top:344.5px" width="14" height="15" viewBox="0 0 14 15"><path d="M7 1.6 L12.8 13.9 L1.2 13.9 Z" fill="none" stroke="#111" stroke-width="1.4"/></svg>
<div class="b" style="left:441px;top:373px;width:25px;height:25px;background:#dedede;border:1px solid #b4b4b4;box-shadow:inset 1px 1px 0 #ececec;box-sizing:border-box"></div>
<svg class="b" style="left:445px;top:377px" width="19" height="19" viewBox="0 0 19 19"><rect x="1.4" y="1.1" width="16.6" height="16.6" fill="#e2e2e6" stroke="#2c2c68" stroke-width="1.5"/><path d="M3.2 4.6 H16 L11.6 9.6 V16.6 H8.4 V9.6 Z" fill="#8484da"/><path d="M9.6 10 L12.6 6 V16.6 H10 Z" fill="#eeeefa" opacity="0.85"/><path d="M1.6 17.4 L17.8 1.4" stroke="#2a2a64" stroke-width="1.7"/></svg>
<svg class="b" style="left:472px;top:376px" width="19" height="18.5" viewBox="0 0 19 18.5"><rect x="0.7" y="0.7" width="17.4" height="16.8" fill="#fff" stroke="#a6a6de" stroke-width="1.3"/><path d="M0.8 0.2 V17.6 H18.3" fill="none" stroke="#38387c" stroke-width="1.5"/><path d="M3.4 17 L8 3.4 H10.2 L14.8 17 M5.4 12.4 H12.8" fill="none" stroke="#7676d6" stroke-width="2.3" stroke-linejoin="miter"/></svg>
<svg class="b" style="left:670.5px;top:376px" width="19" height="18.5" viewBox="0 0 19 18.5"><rect x="0.7" y="0.7" width="17.4" height="16.8" fill="#fff" stroke="#a6a6de" stroke-width="1.3"/><path d="M0.8 0.2 V17.6 H18.3" fill="none" stroke="#38387c" stroke-width="1.5"/><path d="M3.4 17 L8 3.4 H10.2 L14.8 17 M5.4 12.4 H12.8" fill="none" stroke="#7676d6" stroke-width="2.3" stroke-linejoin="miter"/></svg>
<div class="b" style="left:494px;top:371px;width:1px;height:28px;background:repeating-linear-gradient(180deg,#adadad 0 1px,transparent 1px 2px)"></div>
<div class="b" style="left:665px;top:371px;width:1px;height:28px;background:repeating-linear-gradient(180deg,#adadad 0 1px,transparent 1px 2px)"></div>
<div class="b" style="left:692px;top:371px;width:1px;height:28px;background:repeating-linear-gradient(180deg,#adadad 0 1px,transparent 1px 2px)"></div>
<div class="b" style="left:1291px;top:371px;width:1px;height:182px;background:repeating-linear-gradient(180deg,#adadad 0 1px,transparent 1px 2px)"></div>
<div class="b" style="left:467px;top:372px;width:1px;height:155px;background:repeating-linear-gradient(180deg,#adadad 0 1px,transparent 1px 2px)"></div>
<div class="b" style="left:441px;top:400px;width:25.5px;height:24.5px;background:linear-gradient(90deg,#f0f0f0 0,#f0f0f0 85%,#d8d8d8 100%)"></div>
<div class="b" style="left:441px;top:423.5px;width:25.5px;height:1.0px;background:#a9c4c1"></div>
<div class="b" style="left:441px;top:425.5px;width:25.5px;height:24.5px;background:linear-gradient(90deg,#f0f0f0 0,#f0f0f0 85%,#d8d8d8 100%)"></div>
<div class="b" style="left:441px;top:449px;width:25.5px;height:1px;background:#a9c4c1"></div>
<div class="b" style="left:441px;top:451px;width:25.5px;height:24.5px;background:linear-gradient(90deg,#f0f0f0 0,#f0f0f0 85%,#d8d8d8 100%)"></div>
<div class="b" style="left:441px;top:474.5px;width:25.5px;height:1.0px;background:#a9c4c1"></div>
<div class="b" style="left:441px;top:476.5px;width:25.5px;height:24.5px;background:linear-gradient(90deg,#f0f0f0 0,#f0f0f0 85%,#d8d8d8 100%)"></div>
<div class="b" style="left:441px;top:500px;width:25.5px;height:1px;background:#a9c4c1"></div>
<div class="b" style="left:441px;top:502px;width:25.5px;height:25px;background:linear-gradient(90deg,#f0f0f0 0,#f0f0f0 85%,#d8d8d8 100%)"></div>
<div class="b" style="left:441px;top:526px;width:25.5px;height:1px;background:#a9c4c1"></div>
<div class="b" style="left:441px;top:528px;width:25.5px;height:24.5px;background:linear-gradient(90deg,#f0f0f0 0,#f0f0f0 85%,#d8d8d8 100%)"></div>
<div class="b" style="left:441px;top:551.5px;width:25.5px;height:1.0px;background:#a9c4c1"></div>
<div class="b" style="left:666px;top:526px;width:626px;height:26px;background:#0078d7"></div>
<div class="b" style="left:467px;top:526px;width:199px;height:26px;background:#fff"></div>
<div class="b" style="left:467px;top:526px;width:198px;height:1px;background:repeating-linear-gradient(90deg,#111 0 1px,transparent 1px 2px)"></div><div class="b" style="left:468px;top:527px;width:197px;height:1px;background:repeating-linear-gradient(90deg,#111 0 1px,transparent 1px 2px)"></div>
<div class="b" style="left:467px;top:550px;width:198px;height:1px;background:repeating-linear-gradient(90deg,#111 0 1px,transparent 1px 2px)"></div><div class="b" style="left:468px;top:551px;width:197px;height:1px;background:repeating-linear-gradient(90deg,#111 0 1px,transparent 1px 2px)"></div>
<div class="b" style="left:467px;top:526px;width:1px;height:26px;background:repeating-linear-gradient(180deg,#2a6fc0 0 1px,transparent 1px 2px)"></div><div class="b" style="left:468px;top:527px;width:1px;height:25px;background:repeating-linear-gradient(180deg,#2a6fc0 0 1px,transparent 1px 2px)"></div>
<div class="b" style="left:663px;top:526px;width:1px;height:26px;background:repeating-linear-gradient(180deg,#111 0 1px,transparent 1px 2px)"></div><div class="b" style="left:664px;top:527px;width:1px;height:25px;background:repeating-linear-gradient(180deg,#111 0 1px,transparent 1px 2px)"></div>
<svg class="b" style="left:449.5px;top:533px" width="10" height="15" viewBox="0 0 10 15"><path d="M0.5 0.5 L9 7.5 L0.5 14.5 Z" fill="#000"/></svg>
<div class="b" style="left:467px;top:399px;width:824px;height:1px;background:repeating-linear-gradient(90deg,#adadad 0 1px,transparent 1px 2px)"></div>
<div class="b" style="left:467px;top:424px;width:824px;height:1px;background:repeating-linear-gradient(90deg,#adadad 0 1px,transparent 1px 2px)"></div>
<div class="b" style="left:467px;top:450px;width:824px;height:1px;background:repeating-linear-gradient(90deg,#adadad 0 1px,transparent 1px 2px)"></div>
<div class="b" style="left:467px;top:475px;width:824px;height:1px;background:repeating-linear-gradient(90deg,#adadad 0 1px,transparent 1px 2px)"></div>
<div class="b" style="left:467px;top:501px;width:824px;height:1px;background:repeating-linear-gradient(90deg,#adadad 0 1px,transparent 1px 2px)"></div>
<div class="b" style="left:666px;top:526px;width:626px;height:1px;background:repeating-linear-gradient(90deg,#9cc8ef 0 1px,transparent 1px 2px)"></div>
<div class="b" style="left:666px;top:551px;width:626px;height:1px;background:repeating-linear-gradient(90deg,#9cc8ef 0 1px,transparent 1px 2px)"></div>
<div class="b" style="left:665px;top:399px;width:1px;height:128px;background:repeating-linear-gradient(180deg,#adadad 0 1px,transparent 1px 2px)"></div>
<div class="b" style="left:1304px;top:408px;width:33px;height:31px;background:#e1e1e1;border:1px solid #adadad;box-sizing:border-box;"></div>
<div class="b" style="left:1304px;top:468px;width:33px;height:32px;background:#e1e1e1;border:1px solid #adadad;box-sizing:border-box;"></div>
<svg class="b" style="left:1310px;top:413px" width="20" height="21" viewBox="0 0 20 21"><path d="M10 1.8 L18 9 L13.5 9 L13.5 14 C13.5 17.8 10 19.6 3 19.6 L3 17.2 C6 17 7.4 16 7.4 13.5 L7.4 9 L2.4 9 Z" fill="#000"/></svg>
<svg class="b" style="left:1310px;top:474px" width="20" height="21" viewBox="0 0 20 21"><path d="M10 19.2 L2.4 12 L7 12 L7 7 C7 3.2 10.5 1.4 17.6 1.4 L17.6 3.8 C14.5 4 12.6 5 12.6 7.5 L12.6 12 L18 12 Z" fill="#000"/></svg>
<div class="b" style="left:873.5px;top:673px;width:426.0px;height:31px;background:#e1e1e1;border:1px solid #adadad;box-sizing:border-box;"></div>
<svg class="b" style="left:1278.5px;top:685px" width="14" height="9" viewBox="0 0 14 9"><path d="M0.8 1.2 L7 7.4 L13.2 1.2" fill="none" stroke="#444" stroke-width="1.3"/></svg>
<div class="b" style="left:435px;top:843px;width:110px;height:31.5px;background:#e1e1e1;border:1px solid #adadad;box-sizing:border-box;"></div>
<div class="b" style="left:990px;top:843px;width:110px;height:31px;background:#e1e1e1;border:2px solid #0078d7;box-sizing:border-box"></div>
<div class="b" style="left:1112px;top:843px;width:109.5px;height:31px;background:#e1e1e1;border:1px solid #adadad;box-sizing:border-box;"></div>
<div class="b" style="left:1233.5px;top:843px;width:109.5px;height:31px;background:#e1e1e1;border:1px solid #adadad;box-sizing:border-box;"></div>
<span class="t" style="left:431.85px;top:128.84px;font-size:18.5px;letter-spacing:-0.526px;color:#000">Log Message Source Properties</span>
<span class="t" style="left:440.10px;top:177.76px;font-size:18px;letter-spacing:-0.312px;color:#000;transform:scaleX(0.91)">Basic Configuration</span>
<span class="t" style="left:595.10px;top:177.76px;font-size:18px;letter-spacing:-0.320px;color:#000;transform:scaleX(0.91)">Additional Settings</span>
<span class="t" style="left:743.60px;top:174.76px;font-size:18px;letter-spacing:-0.292px;color:#000;transform:scaleX(0.91)">Log Source Virtualization</span>
<span class="t" style="left:937.10px;top:177.76px;font-size:18px;letter-spacing:-0.421px;color:#000;transform:scaleX(0.91)">Flat File Settings</span>
<span class="t" style="left:1070.85px;top:177.76px;font-size:18px;letter-spacing:-0.130px;color:#000;transform:scaleX(0.91)">UDLA Settings</span>
<span class="t" style="left:1193.60px;top:177.76px;font-size:18px;letter-spacing:-0.248px;color:#000;transform:scaleX(0.91)">Additional Info</span>
<span class="t" style="left:476.85px;top:243.51px;font-size:18px;letter-spacing:-0.375px;color:#000;transform:scaleX(0.91)">Enable Virtualization</span>
<span class="t" style="left:1072.85px;top:248.06px;font-size:18px;letter-spacing:-0.273px;color:#000;transform:scaleX(0.91)">Create Virtual Log Sources</span>
<span class="t" style="left:453.10px;top:303.49px;font-size:17.5px;letter-spacing:0.377px;color:#8c8c8c">Drag a column header here to group by that column.</span>
<span class="t" style="left:446.35px;top:344.26px;font-size:18px;letter-spacing:0.112px;color:#000;transform:scaleX(0.91)">Name</span>
<span class="t" style="left:673.60px;top:344.26px;font-size:18px;letter-spacing:0.228px;color:#000;transform:scaleX(0.91)">Log Source Type</span>
<span class="t" style="left:473.85px;top:400.36px;font-size:18px;letter-spacing:-0.072px;color:#000;transform:scaleX(0.91)">10.2.0.167</span>
<span class="t" style="left:558.60px;top:400.36px;font-size:18px;letter-spacing:0.059px;color:#000;transform:scaleX(0.91)">Exabeam</span>
<span class="t" style="left:636.00px;top:400.36px;font-size:18px;letter-spacing:0.000px;color:#000;transform:scaleX(0.91)">C</span>
<span class="t" style="left:646.40px;top:400.36px;font-size:18px;letter-spacing:-1.171px;color:#000;transform:scaleX(0.91)">...</span>
<span class="t" style="left:671.85px;top:401.16px;font-size:18px;letter-spacing:0.258px;color:#000;transform:scaleX(0.91)">Syslog - Open Collector - SentinelOne API - Activities</span>
<span class="t" style="left:473.85px;top:425.86px;font-size:18px;letter-spacing:-0.072px;color:#000;transform:scaleX(0.91)">10.2.0.167</span>
<span class="t" style="left:558.60px;top:425.86px;font-size:18px;letter-spacing:0.059px;color:#000;transform:scaleX(0.91)">Exabeam</span>
<span class="t" style="left:636.00px;top:425.86px;font-size:18px;letter-spacing:0.000px;color:#000;transform:scaleX(0.91)">C</span>
<span class="t" style="left:646.40px;top:425.86px;font-size:18px;letter-spacing:-1.171px;color:#000;transform:scaleX(0.91)">...</span>
<span class="t" style="left:671.85px;top:426.66px;font-size:18px;letter-spacing:0.181px;color:#000;transform:scaleX(0.91)">Syslog - Open Collector - SentinelOne API - Events</span>
<span class="t" style="left:473.85px;top:451.61px;font-size:18px;letter-spacing:-0.072px;color:#000;transform:scaleX(0.91)">10.2.0.167</span>
<span class="t" style="left:558.60px;top:451.61px;font-size:18px;letter-spacing:0.059px;color:#000;transform:scaleX(0.91)">Exabeam</span>
<span class="t" style="left:636.00px;top:451.61px;font-size:18px;letter-spacing:0.000px;color:#000;transform:scaleX(0.91)">C</span>
<span class="t" style="left:646.40px;top:451.61px;font-size:18px;letter-spacing:-1.171px;color:#000;transform:scaleX(0.91)">...</span>
<span class="t" style="left:671.85px;top:452.41px;font-size:18px;letter-spacing:0.196px;color:#000;transform:scaleX(0.91)">Syslog - Open Collector - SentinelOne API - Threats</span>
<span class="t" style="left:473.85px;top:477.11px;font-size:18px;letter-spacing:-0.072px;color:#000;transform:scaleX(0.91)">10.2.0.167</span>
<span class="t" style="left:558.60px;top:477.11px;font-size:18px;letter-spacing:0.059px;color:#000;transform:scaleX(0.91)">Exabeam</span>
<span class="t" style="left:636.00px;top:477.11px;font-size:18px;letter-spacing:0.000px;color:#000;transform:scaleX(0.91)">C</span>
<span class="t" style="left:646.40px;top:477.11px;font-size:18px;letter-spacing:-1.171px;color:#000;transform:scaleX(0.91)">...</span>
<span class="t" style="left:671.85px;top:477.91px;font-size:18px;letter-spacing:0.241px;color:#000;transform:scaleX(0.91)">Syslog - Open Collector - SentinelOne API - Exclusions</span>
<span class="t" style="left:473.85px;top:502.86px;font-size:18px;letter-spacing:-0.072px;color:#000;transform:scaleX(0.91)">10.2.0.167</span>
<span class="t" style="left:558.60px;top:502.86px;font-size:18px;letter-spacing:0.059px;color:#000;transform:scaleX(0.91)">Exabeam</span>
<span class="t" style="left:636.00px;top:502.86px;font-size:18px;letter-spacing:0.000px;color:#000;transform:scaleX(0.91)">C</span>
<span class="t" style="left:646.40px;top:502.86px;font-size:18px;letter-spacing:-1.171px;color:#000;transform:scaleX(0.91)">...</span>
<span class="t" style="left:671.85px;top:503.66px;font-size:18px;letter-spacing:0.217px;color:#000;transform:scaleX(0.91)">Syslog - Open Collector - SentinelOne API - Alerts</span>
<span class="t" style="left:473.85px;top:526.86px;font-size:18px;letter-spacing:-0.072px;color:#000;transform:scaleX(0.91)">10.2.0.167</span>
<span class="t" style="left:558.60px;top:526.86px;font-size:18px;letter-spacing:0.059px;color:#000;transform:scaleX(0.91)">Exabeam</span>
<span class="t" style="left:636.00px;top:526.86px;font-size:18px;letter-spacing:0.000px;color:#000;transform:scaleX(0.91)">C</span>
<span class="t" style="left:646.40px;top:526.86px;font-size:18px;letter-spacing:-1.171px;color:#000;transform:scaleX(0.91)">...</span>
<span class="t" style="left:671.85px;top:528.66px;font-size:18px;letter-spacing:0.192px;color:#fff;transform:scaleX(0.91)">Syslog - Open Collector - SentinelOne API</span>
<span class="t" style="left:878.30px;top:646.16px;font-size:18px;letter-spacing:-0.116px;color:#000;transform:scaleX(0.91)">Default Log Source</span>
<span class="t" style="left:878.90px;top:680.26px;font-size:18px;letter-spacing:-0.344px;color:#000;transform:scaleX(0.91)">10.2.0.167 Exabeam Cases</span>
<span class="t" style="left:450.60px;top:849.96px;font-size:18px;letter-spacing:0.138px;color:#000;transform:scaleX(0.91)">Advanced</span>
<span class="t" style="left:1030.50px;top:850.46px;font-size:18px;letter-spacing:0.605px;color:#000;transform:scaleX(0.91)">OK</span>
<span class="t" style="left:1138.40px;top:850.46px;font-size:18px;letter-spacing:0.002px;color:#000;transform:scaleX(0.91)">Cancel</span>
<span class="t" style="left:1267.10px;top:850.46px;font-size:18px;letter-spacing:-0.410px;color:#000;transform:scaleX(0.91)">Apply</span>
</div></body></html>
